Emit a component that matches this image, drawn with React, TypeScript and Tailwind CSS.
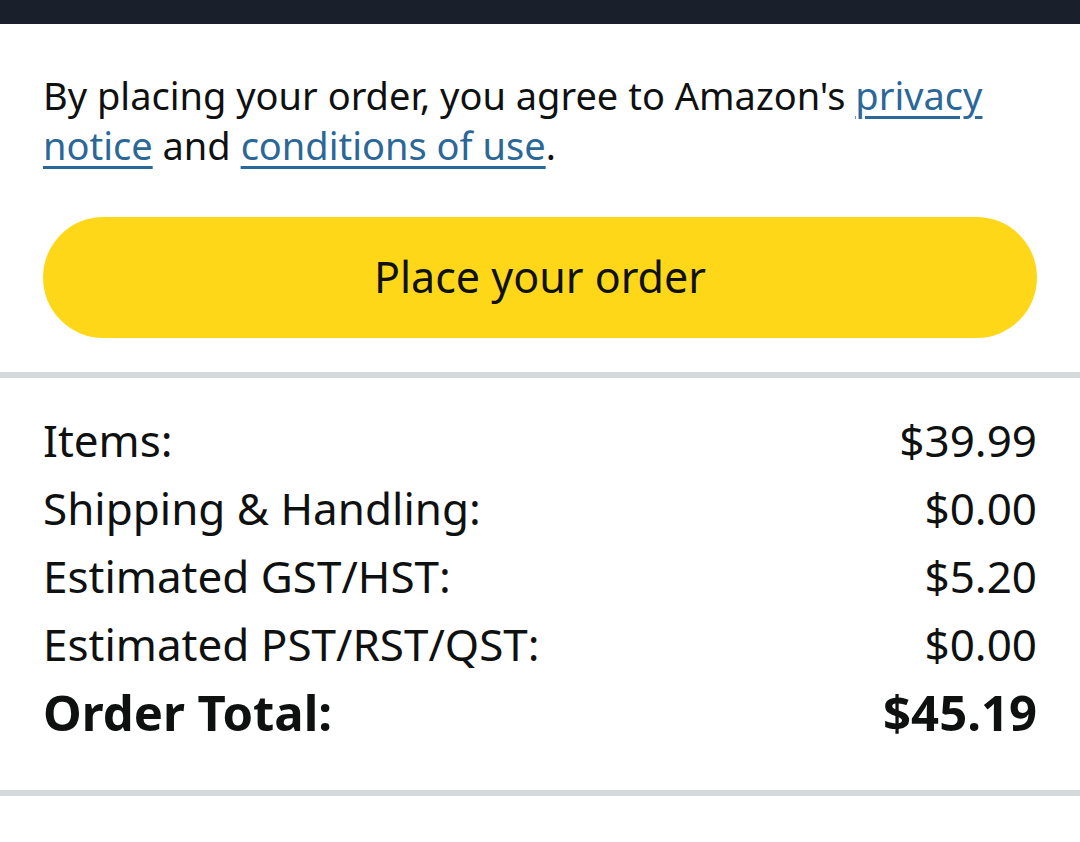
import React from "react";

const rows: [string, string][] = [
  ["Items:", "$39.99"],
  ["Shipping & Handling:", "$0.00"],
  ["Estimated GST/HST:", "$5.20"],
  ["Estimated PST/RST/QST:", "$0.00"],
];

export default function App() {
  return (
    <div className="w-[1080px] h-[842px] bg-white text-[#0f1111] font-['Noto_Sans',sans-serif] overflow-hidden">
      <div className="h-[24px] bg-[#19202b]" />
      <div className="px-[43px] pt-[46px]">
        <p className="text-[38px] leading-[50px]">
          By placing your order, you agree to Amazon's{" "}
          <a className="text-[#2b6797] underline underline-offset-[6px] decoration-[3px]">privacy notice</a> and{" "}
          <a className="text-[#2b6797] underline underline-offset-[6px] decoration-[3px]">conditions of use</a>.
        </p>
        <button className="mt-[47px] w-full h-[121px] rounded-full bg-[#fed818] text-[43px] text-[#0f1111] flex items-center justify-center">
          Place your order
        </button>
      </div>
      <div className="mt-[34px] h-[6px] bg-[#d5d9d9]" />
      <div className="px-[43px] pt-[28px] pb-[44px]">
        {rows.map(([l, v]) => (
          <div key={l} className="flex justify-between text-[44px] leading-[68px]">
            <span>{l}</span>
            <span>{v}</span>
          </div>
        ))}
        <div className="flex justify-between text-[49px] leading-[68px] font-bold">
          <span>Order Total:</span>
          <span>$45.19</span>
        </div>
      </div>
      <div className="h-[6px] bg-[#d5d9d9]" />
    </div>
  );
}
